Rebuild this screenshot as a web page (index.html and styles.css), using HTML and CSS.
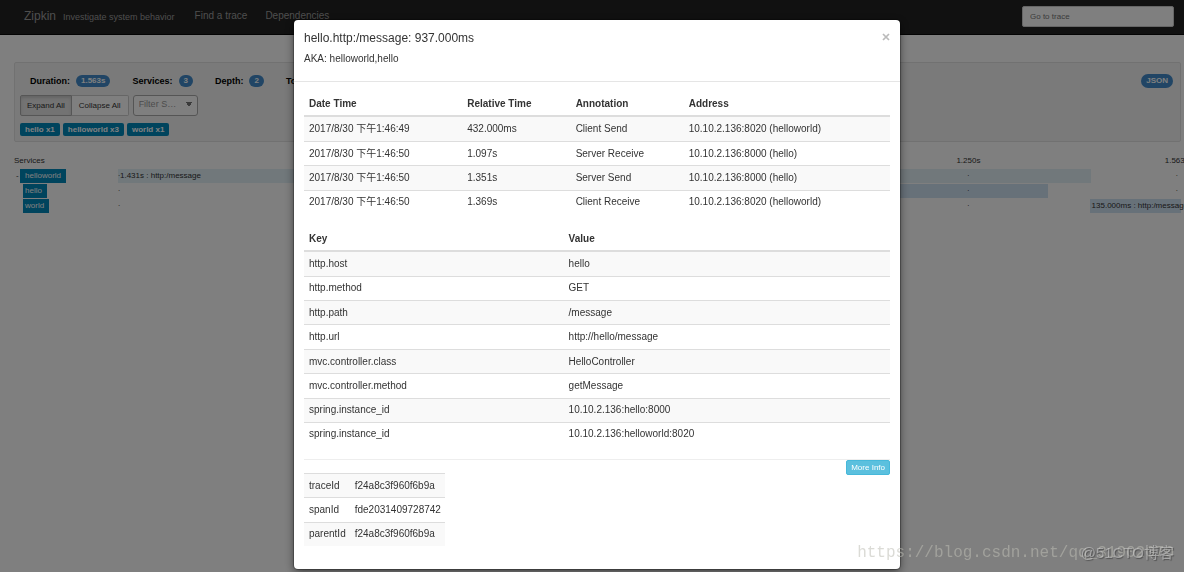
FILE: index.html
```html
<!DOCTYPE html>
<html lang="zh-CN">
<head>
<meta charset="utf-8">
<title>Zipkin</title>
<link rel="stylesheet" href="styles.css">
</head>
<body>
<nav class="navbar">
  <a class="brand" href="#">Zipkin</a>
  <span class="tagline">Investigate system behavior</span>
  <a class="nav-link" href="#">Find a trace</a>
  <a class="nav-link" href="#">Dependencies</a>
  <input class="trace-input" type="text" placeholder="Go to trace" aria-label="Go to trace">
</nav>
<main class="page">
  <section class="well">
    <div class="stats">
      <span class="stat">Duration: <span class="badge">1.563s</span></span>
      <span class="stat">Services: <span class="badge">3</span></span>
      <span class="stat">Depth: <span class="badge">2</span></span>
      <span class="stat">Total Spans: <span class="badge">3</span></span>
      <a class="badge json" href="#">JSON</a>
    </div>
    <div class="controls">
      <div class="button-group">
        <button class="btn active" type="button">Expand All</button><button class="btn" type="button">Collapse All</button>
      </div>
      <select class="filter" aria-label="Filter services"><option>Filter S…</option></select>
    </div>
    <div class="labels">
      <span class="label">hello x1</span>
      <span class="label">helloworld x3</span>
      <span class="label">world x1</span>
    </div>
  </section>
  <section class="trace">
    <div class="trace-row">
      <span>Services</span>
      <div class="track"><span class="tick t4">1.250s</span><span class="tick t5">1.563s</span></div>
    </div>
    <div class="trace-row">
      <div class="service"><span class="toggle">-</span><span class="service-name root">helloworld</span></div>
      <div class="track"><div class="bar" style="width:91.5%">1.431s : http:/message</div><span class="dot t0">·</span><span class="dot t4">·</span><span class="dot t5">·</span></div>
    </div>
    <div class="trace-row">
      <div class="service child"><span class="service-name">hello</span></div>
      <div class="track"><div class="bar client" style="margin-left:27.5%;width:60%"></div><span class="dot t0">·</span><span class="dot t4">·</span><span class="dot t5">·</span></div>
    </div>
    <div class="trace-row">
      <div class="service child"><span class="service-name">world</span></div>
      <div class="track"><div class="bar client" style="margin-left:91.4%;width:8.6%">135.000ms : http:/message</div><span class="dot t0">·</span><span class="dot t4">·</span></div>
    </div>
  </section>
</main>
<div class="backdrop">
  <div class="modal" role="dialog" aria-labelledby="span-title">
    <header class="modal-header">
      <div>
        <h4 class="modal-title" id="span-title">hello.http:/message: 937.000ms</h4>
        <p class="aka">AKA: helloworld,hello</p>
      </div>
      <button class="close" type="button" aria-label="Close"><svg width="8" height="8" viewBox="0 0 8 8"><path d="M1 1L7 7M7 1L1 7" stroke="currentColor" stroke-width="1.7" fill="none"/></svg></button>
    </header>
    <div class="modal-body">
      <table class="table annotations">
        <thead><tr><th class="c-date">Date Time</th><th class="c-rel">Relative Time</th><th class="c-ann">Annotation</th><th>Address</th></tr></thead>
        <tbody>
          <tr><td>2017/8/30 下午1:46:49</td><td>432.000ms</td><td>Client Send</td><td>10.10.2.136:8020 (helloworld)</td></tr>
          <tr><td>2017/8/30 下午1:46:50</td><td>1.097s</td><td>Server Receive</td><td>10.10.2.136:8000 (hello)</td></tr>
          <tr><td>2017/8/30 下午1:46:50</td><td>1.351s</td><td>Server Send</td><td>10.10.2.136:8000 (hello)</td></tr>
          <tr><td>2017/8/30 下午1:46:50</td><td>1.369s</td><td>Client Receive</td><td>10.10.2.136:8020 (helloworld)</td></tr>
        </tbody>
      </table>
      <table class="table tags">
        <thead><tr><th class="c-key">Key</th><th>Value</th></tr></thead>
        <tbody>
          <tr><td>http.host</td><td>hello</td></tr>
          <tr><td>http.method</td><td>GET</td></tr>
          <tr><td>http.path</td><td>/message</td></tr>
          <tr><td>http.url</td><td>http://hello/message</td></tr>
          <tr><td>mvc.controller.class</td><td>HelloController</td></tr>
          <tr><td>mvc.controller.method</td><td>getMessage</td></tr>
          <tr><td>spring.instance_id</td><td>10.10.2.136:hello:8000</td></tr>
          <tr><td>spring.instance_id</td><td>10.10.2.136:helloworld:8020</td></tr>
        </tbody>
      </table>
      <div class="more">
        <table class="table ids">
          <tbody>
            <tr><td>traceId</td><td>f24a8c3f960f6b9a</td></tr>
            <tr><td>spanId</td><td>fde2031409728742</td></tr>
            <tr><td>parentId</td><td>f24a8c3f960f6b9a</td></tr>
          </tbody>
        </table>
        <button class="more-btn" type="button">More Info</button>
      </div>
    </div>
  </div>
</div>
<div class="watermark blog">https://blog.csdn.net/qq_31902070</div>
<div class="watermark cto">@51CTO博客</div>
</body>
</html>
```
FILE: styles.css
```css
* { box-sizing: border-box; }
body {
  margin: 0;
  overflow: hidden;
  background: #fff;
  color: #333;
  font-family: "Liberation Sans", "Noto Sans CJK SC", sans-serif;
  font-size: 8px;
  line-height: 14px;
}
a { text-decoration: none; }
button, input, select { font: inherit; }

.navbar {
  display: flex;
  align-items: center;
  height: 35px;
  padding: 0 10px 2px 24px;
  background: #222;
  border-bottom: 1px solid #080808;
}
.brand { font-size: 12px; color: #9d9d9d; }
.tagline { margin-left: 7px; padding-top: 2px; font-size: 9px; color: #9d9d9d; }
.nav-link { margin-left: 20px; font-size: 10px; color: #9d9d9d; }
.nav-link + .nav-link { margin-left: 18px; }
.trace-input {
  width: 152px;
  height: 21px;
  margin-left: auto;
  padding: 0 7px;
  border: 1px solid #ccc;
  border-radius: 2px;
  background: #fff;
}
.trace-input::placeholder { color: #777; }

.page { padding: 27px 3px 0 14px; }
.well {
  padding: 11px 7px 5px 5px;
  background: #f5f5f5;
  border: 1px solid #e3e3e3;
  border-radius: 2px;
}
.stats {
  display: flex;
  align-items: center;
  gap: 22px;
  padding-left: 10px;
  font-size: 9px;
  font-weight: bold;
  color: #000;
}
.stat { display: flex; align-items: center; gap: 6px; white-space: nowrap; }
.badge {
  padding: 0 5px;
  border-radius: 7px;
  background: #428bca;
  color: #fff;
  font-size: 8px;
  line-height: 12px;
  font-weight: bold;
}
.json { margin-left: auto; line-height: 14px; }
.controls { display: flex; gap: 4px; margin-top: 7px; }
.button-group { display: flex; }
.btn {
  height: 21px;
  padding: 0 7px;
  border: 1px solid #ccc;
  border-left: 0;
  border-radius: 0 2px 2px 0;
  background: #fff;
  color: #333;
}
.btn.active {
  padding: 0 6px;
  border: 1px solid #adadad;
  border-radius: 2px 0 0 2px;
  background: #e6e6e6;
  box-shadow: inset 0 2px 3px rgba(0, 0, 0, .13);
}
.filter {
  width: 65px;
  height: 21px;
  padding: 0 5px 3px;
  appearance: none;
  border: 1px solid #aaa;
  border-radius: 3px;
  background:
    linear-gradient(to bottom right, #777 50%, transparent 50%) right 5px top 6px / 3px 5px no-repeat,
    linear-gradient(to bottom left, #777 50%, transparent 50%) right 8px top 6px / 3px 5px no-repeat,
    #fff;
  color: #999;
  font-size: 9px;
}
.labels { display: flex; gap: 3px; margin-top: 7px; }
.label {
  padding: 0 5px;
  border-radius: 2px;
  background: #08b;
  color: #fff;
  font-weight: bold;
  line-height: 13px;
}

.trace { display: grid; gap: 1px; margin-top: 12px; }
.trace-row { display: grid; grid-template-columns: 104px 1fr; height: 14px; }
.service { display: flex; }
.toggle { width: 6px; padding-left: 2px; }
.service.child { padding-left: 9px; }
.service-name { padding: 0 5px 0 2px; background: #08b; color: #fff; }
.service-name.root { padding: 0 5px; }
.track { position: relative; white-space: nowrap; }
.bar { height: 14px; padding-left: 2px; background: #e2f0f7; }
.bar.client { background: #cfe2f3; }
.tick, .dot { position: absolute; top: 0; transform: translateX(-50%); }
.t0 { left: 1px; }
.t4 { left: 80%; }
.t5 { left: 99.6%; }

.backdrop {
  position: fixed;
  inset: 0;
  padding: 20px 0 0 10px;
  background: rgba(0, 0, 0, .5);
}
.modal {
  max-width: 606px;
  margin: 0 auto;
  border-radius: 4px;
  background: #fff;
  box-shadow: 0 3px 10px rgba(0, 0, 0, .5), 0 0 1px 1px rgba(0, 0, 0, .3);
  font-size: 10px;
}
.modal-header {
  display: flex;
  justify-content: space-between;
  align-items: flex-start;
  padding: 10px 10px 15px;
  border-bottom: 1px solid #e5e5e5;
}
.modal-title { margin: 0; font-size: 12px; font-weight: normal; line-height: 16px; }
.aka { margin: 6px 0 0; }
.close { display: flex; margin-top: 3px; padding: 0; border: 0; background: none; color: #bbb; }
.modal-body { padding: 9px 10px 23px; }
.table { width: 100%; border-collapse: collapse; }
.table th, .table td { padding: 0 5px; text-align: left; white-space: nowrap; }
.table th { height: 25px; padding-top: 2px; border-bottom: 2px solid #ddd; }
.table td { border-top: 1px solid #ddd; }
.table tbody tr:nth-child(odd) { background: #f9f9f9; }
.annotations { height: 123px; margin-bottom: 12px; }
.c-date { width: 27%; }
.c-rel { width: 18.5%; }
.c-ann { width: 19.3%; }
.tags { height: 220px; }
.c-key { width: 44.3%; }
.more {
  display: flex;
  justify-content: space-between;
  align-items: flex-start;
  margin-top: 13px;
  border-top: 1px solid #eee;
}
.ids { width: auto; height: 73px; margin-top: 13px; }
.ids td { padding-right: 4px; }
.more-btn {
  height: 15px;
  padding: 0 4px;
  border: 1px solid #46b8da;
  border-radius: 2px;
  background: #5bc0de;
  color: #fff;
  font-size: 8px;
  line-height: 13px;
}

.watermark { position: fixed; right: 10px; bottom: 8px; white-space: nowrap; }
.blog {
  color: rgba(190, 190, 180, .55);
  font-family: "Liberation Mono", monospace;
  font-size: 16px;
  line-height: 22px;
}
.cto {
  color: rgba(215, 215, 215, .5);
  font-size: 15px;
  line-height: 22px;
  text-shadow: 1px 1px 1px rgba(0, 0, 0, .35);
}
```
